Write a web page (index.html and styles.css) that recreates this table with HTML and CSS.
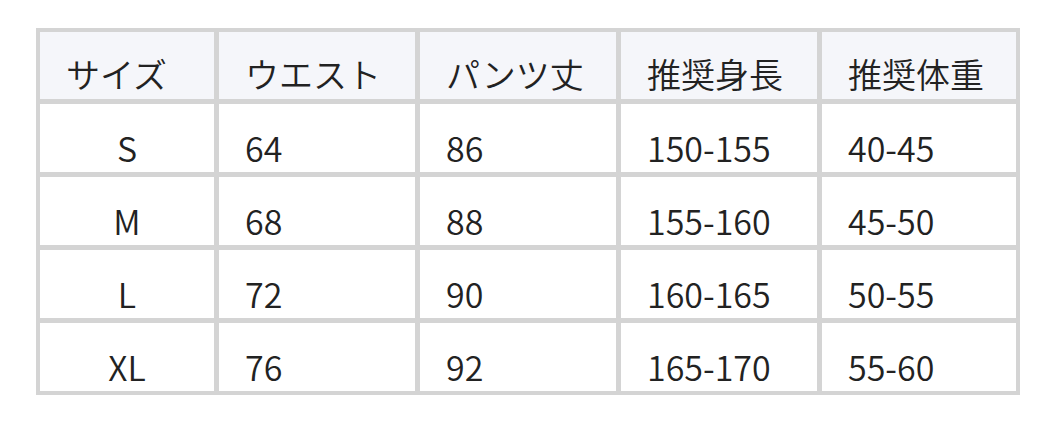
FILE: index.html
```html
<!DOCTYPE html>
<html lang="ja">
<head>
<meta charset="utf-8">
<link rel="stylesheet" href="styles.css">
</head>
<body>
<table class="size-table">
  <colgroup>
    <col class="c1"><col class="c2"><col class="c3"><col class="c4"><col class="c5">
  </colgroup>
  <thead>
    <tr class="head-row">
      <th>サイズ</th><th>ウエスト</th><th>パンツ丈</th><th>推奨身長</th><th>推奨体重</th>
    </tr>
  </thead>
  <tbody>
    <tr><td class="size">S</td><td>64</td><td>86</td><td>150-155</td><td>40-45</td></tr>
    <tr><td class="size">M</td><td>68</td><td>88</td><td>155-160</td><td>45-50</td></tr>
    <tr><td class="size">L</td><td>72</td><td>90</td><td>160-165</td><td>50-55</td></tr>
    <tr><td class="size">XL</td><td>76</td><td>92</td><td>165-170</td><td>55-60</td></tr>
  </tbody>
</table>
</body>
</html>
```
FILE: styles.css
```css
html, body {
  margin: 0;
  padding: 0;
  background: #ffffff;
}
body {
  padding: 28px 0 0 36px;
  font-family: "Noto Sans CJK JP", "Noto Sans", sans-serif;
  color: #222222;
}
.size-table {
  border-collapse: separate;
  border-spacing: 0;
  border: 4px solid #d4d4d4;
  table-layout: fixed;
  width: 984px;
}
.c1 { width: 174px; }
.c2 { width: 201px; }
.c3 { width: 201px; }
.c4 { width: 201px; }
.c5 { width: 199px; }
.size-table th,
.size-table td {
  font-size: 34px;
  font-weight: 350;
  text-align: left;
  vertical-align: bottom;
  padding: 0 0 0 26px;
  border-left: 5px solid #d4d4d4;
  border-top: 5px solid #d4d4d4;
  line-height: 1.45;
  white-space: nowrap;
}
.size-table th:first-child,
.size-table td:first-child {
  border-left: none;
}
.size-table thead th {
  border-top: none;
  background: #f5f6fa;
  height: 66px;
  padding-bottom: 1px;
}
.size-table tbody td {
  height: 68px;
}
.size-table td.size {
  text-align: center;
  padding-left: 0;
}
```
